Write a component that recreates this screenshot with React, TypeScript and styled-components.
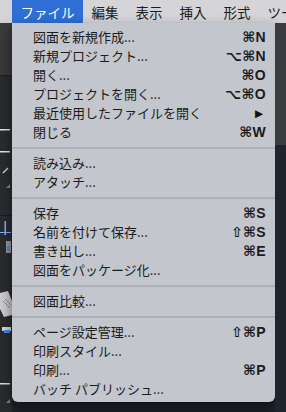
import styled, { createGlobalStyle } from "styled-components";

const GlobalStyle = createGlobalStyle`
  html, body {
    margin: 0;
    padding: 0;
    background: #1f232b;
  }
  #root {
    width: 286px;
    height: 412px;
    overflow: hidden;
  }
`;

type Item = { label: string; keys?: string; submenu?: boolean };

const groups: Item[][] = [
  [
    { label: "図面を新規作成...", keys: "⌘N" },
    { label: "新規プロジェクト...", keys: "⌥⌘N" },
    { label: "開く...", keys: "⌘O" },
    { label: "プロジェクトを開く...", keys: "⌥⌘O" },
    { label: "最近使用したファイルを開く", submenu: true },
    { label: "閉じる", keys: "⌘W" },
  ],
  [{ label: "読み込み..." }, { label: "アタッチ..." }],
  [
    { label: "保存", keys: "⌘S" },
    { label: "名前を付けて保存...", keys: "⇧⌘S" },
    { label: "書き出し...", keys: "⌘E" },
    { label: "図面をパッケージ化..." },
  ],
  [{ label: "図面比較..." }],
  [
    { label: "ページ設定管理...", keys: "⇧⌘P" },
    { label: "印刷スタイル..." },
    { label: "印刷...", keys: "⌘P" },
    { label: "バッチ パブリッシュ..." },
  ],
];

const menus = ["ファイル", "編集", "表示", "挿入", "形式", "ツール"];

const Screen = styled.div`
  width: 286px;
  height: 412px;
  display: flex;
  flex-direction: column;
  background: #1f232b;
  overflow: hidden;
  font-family: "Noto Sans CJK JP", "DejaVu Sans", sans-serif;
`;

const MenuBar = styled.nav`
  height: 23px;
  flex-shrink: 0;
  display: flex;
  align-items: stretch;
  padding-left: 12px;
  background: #d5d5d9;
  white-space: nowrap;
  overflow: hidden;
`;

const BarItem = styled.div<{ $active?: boolean }>`
  display: flex;
  align-items: center;
  padding: 0 8.5px;
  font-size: 13.5px;
  color: ${(p) => (p.$active ? "#ffffff" : "#1c1c1c")};
  background: ${(p) => (p.$active ? "#2f6ed6" : "transparent")};
`;

const Workspace = styled.div`
  flex: 1;
  min-height: 0;
  display: grid;
  grid-template-columns: 12px 263px 1fr;
`;

const LeftDock = styled.div`
  background: #2b2c30;
  overflow: hidden;

  svg {
    display: block;
  }
`;

const RightDock = styled.div`
  display: flex;
  flex-direction: column;
`;

const DockPanel = styled.div<{ $tone: string; $height?: number }>`
  background: ${(p) => p.$tone};
  height: ${(p) => (p.$height ? `${p.$height}px` : "auto")};
  flex: ${(p) => (p.$height ? "none" : "1")};
`;

const Menu = styled.div`
  align-self: start;
  background: #c3c6cd;
  padding: 4px 0;
  border-radius: 0 0 6px 6px;
  box-shadow: 0 6px 14px rgba(0, 0, 0, 0.55);
`;

const Row = styled.div`
  height: 19px;
  display: flex;
  align-items: center;
  justify-content: space-between;
  padding: 0 9px 0 21px;
  font-size: 13px;
  color: #1b1b1b;
  white-space: nowrap;
`;

const Keys = styled.span`
  font-family: "Liberation Sans", "DejaVu Sans", sans-serif;
  font-size: 14px;
  font-weight: 600;
  color: #1b1b1b;
  letter-spacing: 0.3px;
`;

const Arrow = styled.span`
  font-family: "DejaVu Sans", sans-serif;
  font-size: 10.5px;
  margin-right: 3px;
  color: #111;
`;

const Divider = styled.div`
  height: 2px;
  margin: 6px 0 4px;
  background: #acafb6;
`;

function DockGlyphs() {
  return (
    <svg width="12" height="389" viewBox="0 0 12 389">
      <rect x="0" y="0" width="12" height="52" fill="#3a3a3d" />
      <rect x="0" y="52" width="12" height="1" fill="#202124" />
      <rect x="0" y="106" width="10" height="1.5" fill="#e8e8e8" />
      <rect x="0" y="128" width="10" height="1.5" fill="#e8e8e8" />
      <line x1="3" y1="150" x2="8" y2="145" stroke="#dcdcdc" strokeWidth="1.2" />
      <path d="M6 165 L10 161 L10 165 Z" fill="#8a8a8d" />
      <rect x="0" y="192" width="12" height="1" fill="#1d1e21" />
      <rect x="4.5" y="198" width="1.5" height="14" fill="#7fb3ff" />
      <rect x="0" y="209" width="11" height="1" fill="#7fb3ff" />
      <rect x="6" y="218" width="5" height="12" fill="#9a9a9c" />
      <rect x="7" y="223" width="3" height="5" fill="#4a90e2" />
      <path d="M0 270 L8 268 L12 278 L12 292 L4 294 L0 286 Z" fill="#d0d0d2" />
      <path d="M3 278 L10 285 M5 276 L11 282" stroke="#8e8e90" strokeWidth="1" />
      <rect x="2" y="304" width="9" height="4" fill="#d8d8da" />
      <rect x="4" y="307" width="6" height="3" fill="#3d8ef0" />
      <rect x="0" y="360" width="10" height="1.5" fill="#e0e0e0" />
      <path d="M6 380 L10 376 L10 380 Z" fill="#8a8a8d" />
    </svg>
  );
}

export default function App() {
  return (
    <Screen>
      <GlobalStyle />
      <MenuBar>
        {menus.map((m, i) => (
          <BarItem key={m} $active={i === 0}>
            {m}
          </BarItem>
        ))}
      </MenuBar>
      <Workspace>
        <LeftDock>
          <DockGlyphs />
        </LeftDock>
        <Menu>
          {groups.map((group, gi) => (
            <div key={gi}>
              {gi > 0 && <Divider />}
              {group.map((item) => (
                <Row key={item.label}>
                  <span>{item.label}</span>
                  {item.keys && <Keys>{item.keys}</Keys>}
                  {item.submenu && <Arrow>▶</Arrow>}
                </Row>
              ))}
            </div>
          ))}
        </Menu>
        <RightDock>
          <DockPanel $tone="#3b3c40" $height={122} />
          <DockPanel $tone="#20242c" />
        </RightDock>
      </Workspace>
    </Screen>
  );
}
